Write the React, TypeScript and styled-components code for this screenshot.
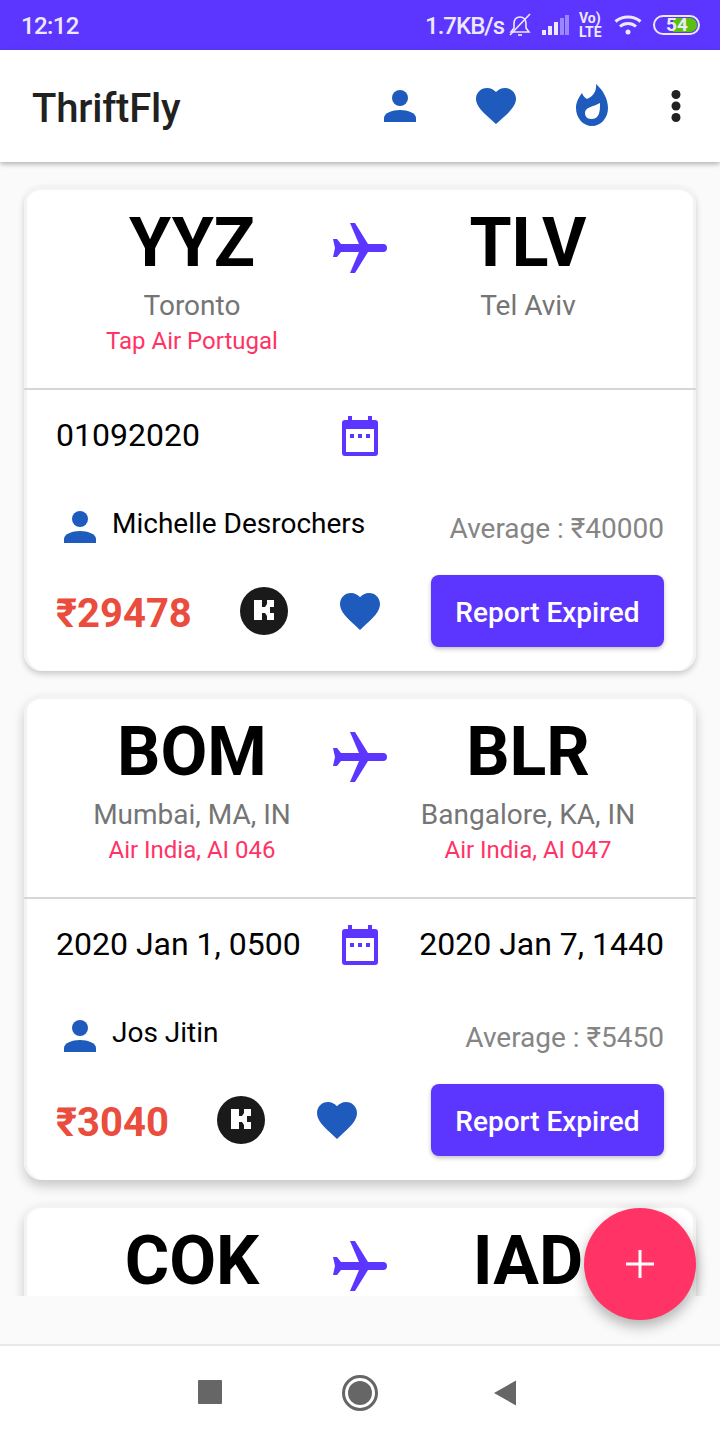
import styled, { createGlobalStyle } from 'styled-components';

const GlobalStyle = createGlobalStyle`
  html, body {
    margin: 0;
    padding: 0;
    background: #fafafa;
  }
  * {
    box-sizing: border-box;
  }
`;

const Screen = styled.div`
  position: relative;
  width: 720px;
  height: 1440px;
  display: flex;
  flex-direction: column;
  overflow: hidden;
  background: #fafafa;
  font-family: Roboto, 'Noto Sans', sans-serif;
`;

const StatusBar = styled.div`
  height: 50px;
  flex: none;
  background: #5c36ff;
  color: #ece9ff;
  display: flex;
  align-items: center;
  padding: 0 20px 0 21px;
`;

const Clock = styled.div`
  font-size: 24px;
  font-weight: 500;
  letter-spacing: -0.6px;
  margin: 2px auto 0 0;
`;

const NetSpeed = styled.div`
  font-size: 24px;
  font-weight: 500;
  letter-spacing: -1px;
  margin: 2px 4px 0 0;
`;

const BellSlot = styled.div`
  display: flex;
  margin-right: 10px;
`;

const VolteBadge = styled.div`
  display: flex;
  flex-direction: column;
  align-items: flex-start;
  font-size: 14px;
  font-weight: 700;
  line-height: 14px;
  margin: 0 11px 0 10px;
  width: 24px;
`;

const Battery = styled.div`
  position: relative;
  width: 47px;
  height: 20px;
  margin-left: 11px;
  border: 2px solid #ece9ff;
  border-radius: 10px;
  display: flex;
  align-items: center;
  justify-content: center;
`;

const BatteryFill = styled.div`
  position: absolute;
  top: 1px;
  bottom: 1px;
  right: 1px;
  width: 24px;
  border-radius: 0 8px 8px 0;
  background: #5ac10f;
`;

const BatteryLevel = styled.span`
  position: relative;
  font-size: 19px;
  font-weight: 700;
  line-height: 16px;
  margin-left: 1px;
`;

const AppBar = styled.header`
  position: relative;
  z-index: 2;
  height: 112px;
  flex: none;
  background: #fff;
  box-shadow: 0 2px 5px rgba(0, 0, 0, 0.3);
  display: flex;
  align-items: center;
  padding: 0 38px 0 32px;
`;

const AppTitle = styled.h1`
  margin: 5px auto 0 0;
  font-size: 40px;
  font-weight: 500;
  color: #212121;
  letter-spacing: -0.2px;
`;

const BarAction = styled.div<{ $width: number; $gap: number; $lift?: number }>`
  width: ${p => p.$width}px;
  margin-left: ${p => p.$gap}px;
  margin-top: ${p => -(p.$lift ?? 0)}px;
  display: flex;
  justify-content: center;
`;

const Feed = styled.main`
  height: 1134px;
  flex: none;
  overflow: hidden;
  padding: 24px 24px 0;
  display: flex;
  flex-direction: column;
  gap: 24px;
`;

const Card = styled.article<{ $shadow: number }>`
  flex: none;
  height: 485px;
  background: #fff;
  border-radius: 18px;
  box-shadow:
    inset 3px 0 1px #f3f3f3,
    inset -3px 0 1px #f3f3f3,
    inset 0 4px 1px #f3f3f3,
    0 ${p => p.$shadow}px ${p => p.$shadow * 2}px rgba(0, 0, 0, 0.2);
`;

const RouteSection = styled.section`
  position: relative;
  height: 204px;
  border-bottom: 2px solid #d6d6d6;
  display: grid;
  grid-template-columns: 1fr 1fr;
`;

const Airport = styled.div`
  display: flex;
  flex-direction: column;
  align-items: center;
  padding-top: 17px;
`;

const Code = styled.div`
  font-size: 68px;
  font-weight: 700;
  line-height: 80px;
  color: #000;
`;

const City = styled.div`
  font-size: 28px;
  line-height: 35px;
  color: #757575;
  margin-top: 5px;
`;

const Carrier = styled.div`
  font-size: 24px;
  line-height: 36px;
  color: #ff3366;
`;

const PlaneSlot = styled.div`
  position: absolute;
  left: 309px;
  top: 37px;
  width: 54px;
  height: 50px;
`;

const DateRow = styled.div`
  display: grid;
  grid-template-columns: 1fr 36px 1fr;
  padding: 26px 32px 0;
  height: 121px;
`;

const DateText = styled.div<{ $end?: boolean }>`
  font-size: 32px;
  line-height: 38px;
  color: #000;
  white-space: nowrap;
  text-align: ${p => (p.$end ? 'right' : 'left')};
`;

const TravellerRow = styled.div`
  display: flex;
  align-items: flex-start;
  padding: 0 32px 0 40px;
  height: 64px;
`;

const TravellerName = styled.div`
  font-size: 28px;
  line-height: 36px;
  color: #000;
  margin: -5px auto 0 16px;
`;

const AverageFare = styled.div`
  font-size: 28px;
  line-height: 36px;
  color: #858585;
`;

const ActionRow = styled.div`
  display: flex;
  align-items: center;
  height: 72px;
  padding: 0 32px;
`;

const Price = styled.div`
  font-size: 40px;
  font-weight: 700;
  color: #ea4c3d;
  line-height: 72px;
  margin: 6px 48px 0 0;
`;

const KiwiBadge = styled.div`
  width: 48px;
  height: 48px;
  border-radius: 50%;
  background: #1a1a1a;
  margin-right: 52px;
`;

const ReportButton = styled.button`
  margin-left: auto;
  width: 233px;
  height: 72px;
  border: none;
  border-radius: 8px;
  padding: 2px 0 0;
  background: #5c36ff;
  color: #fff;
  font-family: inherit;
  font-size: 28px;
  font-weight: 500;
  box-shadow: 0 2px 4px rgba(0, 0, 0, 0.25);
`;

const Gutter = styled.div`
  height: 48px;
  flex: none;
  background: #fafafa;
`;

const NavBar = styled.nav`
  height: 96px;
  flex: none;
  background: #fff;
  border-top: 2px solid #e8e8e8;
  display: grid;
  grid-template-columns: 198px 36px 108px 36px 1fr;
  padding-top: 29px;
  align-items: start;
`;

const NavSquare = styled.div`
  grid-column: 2;
  width: 24px;
  height: 24px;
  margin-top: 5px;
  border-radius: 1px;
  background: #666;
`;

const NavCircle = styled.div`
  grid-column: 3 / span 2;
  justify-self: end;
  width: 36px;
  height: 36px;
  border-radius: 50%;
  border: 3px solid #666;
  display: flex;
  align-items: center;
  justify-content: center;
  &::after {
    content: '';
    width: 24px;
    height: 24px;
    border-radius: 50%;
    background: #666;
  }
`;

const NavBack = styled.div`
  grid-column: 5;
  margin: 5px 0 0 115px;
  width: 24px;
  height: 26px;
`;

const Fab = styled.button`
  position: absolute;
  left: 584px;
  top: 1208px;
  z-index: 3;
  width: 112px;
  height: 112px;
  border: none;
  border-radius: 50%;
  background: #ff3366;
  box-shadow: 0 6px 14px rgba(0, 0, 0, 0.3);
  display: flex;
  align-items: center;
  justify-content: center;
  padding: 0;
`;

const PersonIcon = () => (
  <svg width="32" height="32" viewBox="0 0 32 32" fill="#1f5bbd">
    <circle cx="16" cy="8" r="8" />
    <path d="M0 32V28C0 23 8 20 16 20C24 20 32 23 32 28V32Z" />
  </svg>
);

const HeartIcon = ({ width, height }: { width: number; height: number }) => (
  <svg width={width} height={height} viewBox="2 3 20 18.35" fill="#1f5bbd" preserveAspectRatio="none">
    <path d="M12 21.35l-1.45-1.32C5.4 15.36 2 12.28 2 8.5 2 5.42 4.42 3 7.5 3c1.74 0 3.41.81 4.5 2.09C13.09 3.81 14.76 3 16.5 3 19.58 3 22 5.42 22 8.5c0 3.78-3.4 6.86-8.55 11.54L12 21.35z" />
  </svg>
);

const FlameIcon = () => (
  <svg width="32" height="42" viewBox="0 0 32 42" fill="#1f5bbd">
    <path
      fillRule="evenodd"
      d="M20 0C27 6 32 15 32 24C32 34 25 42 16 42C7 42 0 34 0 24C0 18 3 13 6 9C7 12 9 14 11 15C16 13 21 8 20 0ZM24 19C24 27 24 35 15 35C11 35 9 32 9 29C9 23 17 23 24 19Z"
    />
  </svg>
);

const MoreIcon = () => (
  <svg width="12" height="32" viewBox="0 0 12 32" fill="#212121">
    <circle cx="6" cy="4.500" r="4.500" />
    <circle cx="6" cy="16" r="4.500" />
    <circle cx="6" cy="27.500" r="4.500" />
  </svg>
);

const PlaneIcon = () => (
  <svg width="54" height="50" viewBox="0 0 54 50" fill="#5c36ff">
    <path d="M17 0H22L35 21H50A4 4 0 0 1 50 29H35L22 50H17L26 29H8L4 34H0L2 25L0 16H4L8 21H26Z" />
  </svg>
);

const CalendarIcon = () => (
  <svg width="36" height="40" viewBox="0 0 36 40" fill="#5c36ff">
    <path
      fillRule="evenodd"
      d="M6 0H10V4H26V0H30V4H33A3 3 0 0 1 36 7V37A3 3 0 0 1 33 40H3A3 3 0 0 1 0 37V7A3 3 0 0 1 3 4H6ZM4 13V36H32V13Z"
    />
    <rect x="8" y="18" width="4" height="4" />
    <rect x="16" y="18" width="4" height="4" />
    <rect x="24" y="18" width="4" height="4" />
  </svg>
);

const KiwiMark = () => (
  <svg width="48" height="48" viewBox="0 0 48 48" fill="#fff">
    <path d="M14 13H22V20H25L27 17V13H34V20H30V26H34V33H27V29L25 26H22V33H14Z" />
  </svg>
);

const BellOffIcon = () => (
  <svg width="24" height="24" viewBox="0 0 24 24" fill="none" stroke="#ece9ff" strokeWidth="1.6">
    <path d="M12 4C8 4 6 7 6 11V15L3 19H21L18 15V11C18 7 16 4 12 4Z" />
    <path d="M10 22H14" />
    <path d="M22 1L2 22" />
  </svg>
);

const SignalIcon = () => (
  <svg width="27" height="20" viewBox="0 0 27 20" fill="#ece9ff">
    <rect x="0" y="15" width="4" height="5" />
    <rect x="6" y="11" width="4" height="9" />
    <rect x="12" y="7" width="4" height="13" />
    <rect x="18" y="3" width="4" height="17" opacity="0.45" />
    <rect x="23" y="0" width="4" height="20" opacity="0.45" />
  </svg>
);

const WifiIcon = () => (
  <svg width="28" height="20" viewBox="0 0 28 20" fill="none" stroke="#ece9ff" strokeWidth="3">
    <path d="M1.500 6.500C8.500 0.500 19.500 0.500 26.500 6.500" />
    <path d="M6 11.500C10.500 7.500 17.500 7.500 22 11.500" />
    <circle cx="14" cy="17" r="2.500" fill="#ece9ff" stroke="none" />
  </svg>
);

const BackTriangle = () => (
  <svg width="24" height="26" viewBox="0 0 24 26" fill="#666">
    <path d="M23 0.500V25.500L1 13Z" />
  </svg>
);

const PlusIcon = () => (
  <svg width="28" height="28" viewBox="0 0 28 28" fill="#fff">
    <rect x="12.500" y="0" width="3" height="28" />
    <rect x="0" y="12.500" width="28" height="3" />
  </svg>
);

interface Flight {
  from: string;
  to: string;
  fromCity?: string;
  toCity?: string;
  fromCarrier?: string;
  toCarrier?: string;
  departs?: string;
  returns?: string;
  traveller?: string;
  average?: number;
  price?: number;
  shadow: number;
}

const flights: Flight[] = [
  {
    from: 'YYZ',
    to: 'TLV',
    fromCity: 'Toronto',
    toCity: 'Tel Aviv',
    fromCarrier: 'Tap Air Portugal',
    departs: '01092020',
    traveller: 'Michelle Desrochers',
    average: 40000,
    price: 29478,
    shadow: 3,
  },
  {
    from: 'BOM',
    to: 'BLR',
    fromCity: 'Mumbai, MA, IN',
    toCity: 'Bangalore, KA, IN',
    fromCarrier: 'Air India, AI 046',
    toCarrier: 'Air India, AI 047',
    departs: '2020 Jan 1, 0500',
    returns: '2020 Jan 7, 1440',
    traveller: 'Jos Jitin',
    average: 5450,
    price: 3040,
    shadow: 6,
  },
  { from: 'COK', to: 'IAD', shadow: 6 },
];

const FlightCard = ({ flight }: { flight: Flight }) => (
  <Card $shadow={flight.shadow}>
    <RouteSection>
      <Airport>
        <Code>{flight.from}</Code>
        <City>{flight.fromCity}</City>
        <Carrier>{flight.fromCarrier}</Carrier>
      </Airport>
      <PlaneSlot>
        <PlaneIcon />
      </PlaneSlot>
      <Airport>
        <Code>{flight.to}</Code>
        <City>{flight.toCity}</City>
        <Carrier>{flight.toCarrier}</Carrier>
      </Airport>
    </RouteSection>
    {flight.price && (
      <>
        <DateRow>
          <DateText>{flight.departs}</DateText>
          <CalendarIcon />
          <DateText $end>{flight.returns}</DateText>
        </DateRow>
        <TravellerRow>
          <PersonIcon />
          <TravellerName>{flight.traveller}</TravellerName>
          <AverageFare>Average : ₹{flight.average}</AverageFare>
        </TravellerRow>
        <ActionRow>
          <Price>₹{flight.price}</Price>
          <KiwiBadge>
            <KiwiMark />
          </KiwiBadge>
          <HeartIcon width={40} height={37} />
          <ReportButton>Report Expired</ReportButton>
        </ActionRow>
      </>
    )}
  </Card>
);

export default function App() {
  return (
    <Screen>
      <GlobalStyle />
      <StatusBar>
        <Clock>12:12</Clock>
        <NetSpeed>1.7KB/s</NetSpeed>
        <BellSlot>
          <BellOffIcon />
        </BellSlot>
        <SignalIcon />
        <VolteBadge>
          <span>Vo)</span>
          <span>LTE</span>
        </VolteBadge>
        <WifiIcon />
        <Battery>
          <BatteryFill />
          <BatteryLevel>54</BatteryLevel>
        </Battery>
      </StatusBar>
      <AppBar>
        <AppTitle>ThriftFly</AppTitle>
        <BarAction $width={32} $gap={0}>
          <PersonIcon />
        </BarAction>
        <BarAction $width={40} $gap={60}>
          <HeartIcon width={40} height={36} />
        </BarAction>
        <BarAction $width={32} $gap={60} $lift={2}>
          <FlameIcon />
        </BarAction>
        <BarAction $width={12} $gap={62}>
          <MoreIcon />
        </BarAction>
      </AppBar>
      <Feed>
        {flights.map(flight => (
          <FlightCard key={flight.from} flight={flight} />
        ))}
      </Feed>
      <Gutter />
      <NavBar>
        <NavSquare />
        <NavCircle />
        <NavBack>
          <BackTriangle />
        </NavBack>
      </NavBar>
      <Fab>
        <PlusIcon />
      </Fab>
    </Screen>
  );
}
